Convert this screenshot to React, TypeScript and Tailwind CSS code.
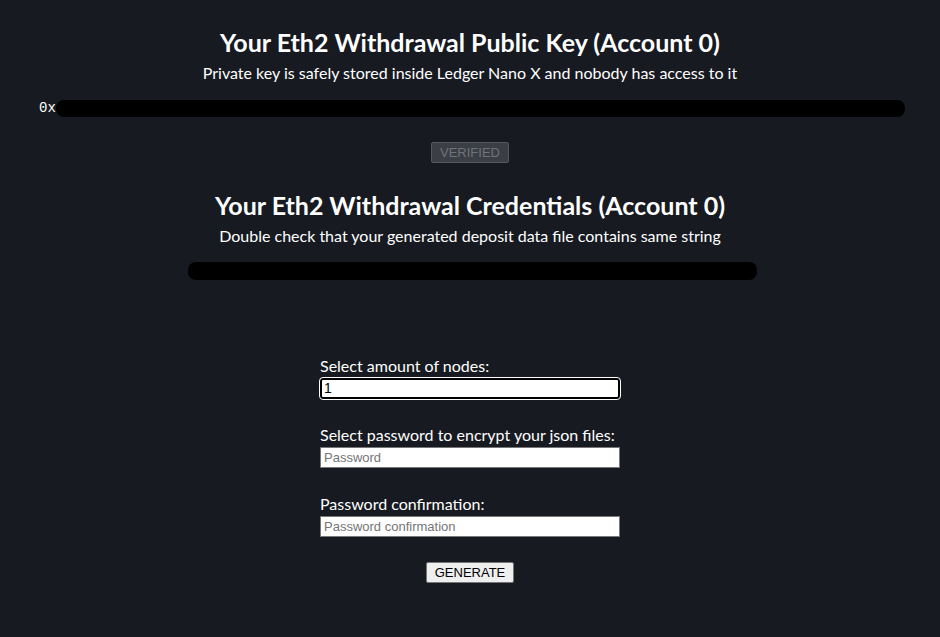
import { useState } from 'react'

const sans = { fontFamily: 'Lato, "Noto Sans", sans-serif' }

export default function App() {
  const [nodes, setNodes] = useState('1')
  const [password, setPassword] = useState('')
  const [confirm, setConfirm] = useState('')

  return (
    <div className="min-h-[637px] w-full bg-[#171a21] text-white" style={sans}>
      <div className="flex flex-col items-center pt-[27px]">
        <h1 className="text-[25px] font-bold leading-[30px]">Your Eth2 Withdrawal Public Key (Account 0)</h1>
        <p className="mt-[7px] text-[16px] leading-[18px]">Private key is safely stored inside Ledger Nano X and nobody has access to it</p>

        {/* public key, hidden */}
        <div className="mt-[18px] flex w-full items-center pl-[39px] pr-[35px]">
          <span className="font-['Liberation_Mono',monospace] text-[14px] leading-[17px] text-white">0x</span>
          <div className="h-[17px] flex-1 rounded-[8px] bg-black"></div>
        </div>

        <button
          disabled
          className="mt-[25px] h-[21px] w-[78px] rounded-[2px] border border-[#55585e] bg-[#3b3e44] font-['Liberation_Sans',sans-serif] text-[13px] leading-[19px] text-[#6f737a]"
        >
          VERIFIED
        </button>

        <h2 className="mt-[27px] text-[25px] font-bold leading-[30px]">Your Eth2 Withdrawal Credentials (Account 0)</h2>
        <p className="mt-[7px] text-[16px] leading-[18px]">Double check that your generated deposit data file contains same string</p>
        <div className="ml-[5px] mt-[17px] h-[18px] w-[569px] rounded-[8px] bg-black"></div>

        {/* form */}
        <div className="mt-[76px] flex w-[300px] flex-col">
          <label className="mb-[2px] text-[16px] leading-[20px]">Select amount of nodes:</label>
          <input
            value={nodes}
            onChange={(e) => setNodes(e.target.value)}
            className="h-[21px] w-[300px] rounded-[3px] border-2 border-black bg-white px-[2px] font-['Liberation_Sans',sans-serif] text-[14px] text-black outline outline-1 outline-white"
          />

          <label className="mb-[2px] mt-[26px] text-[16px] leading-[20px]">Select password to encrypt your json files:</label>
          <input
            type="password"
            placeholder="Password"
            value={password}
            onChange={(e) => setPassword(e.target.value)}
            className="h-[21px] w-[300px] border border-[#767676] bg-white px-[3px] font-['Liberation_Sans',sans-serif] text-[13px] text-black placeholder:text-[#757575] focus:outline-none"
          />

          <label className="mb-[2px] mt-[26px] text-[16px] leading-[20px]">Password confirmation:</label>
          <input
            type="password"
            placeholder="Password confirmation"
            value={confirm}
            onChange={(e) => setConfirm(e.target.value)}
            className="h-[21px] w-[300px] border border-[#767676] bg-white px-[3px] font-['Liberation_Sans',sans-serif] text-[13px] text-black placeholder:text-[#757575] focus:outline-none"
          />

          <button className="mx-auto mt-[25px] h-[21px] w-[88px] rounded-[2px] border border-[#767676] bg-[#efefef] font-['Liberation_Sans',sans-serif] text-[13px] leading-[19px] text-black">
            GENERATE
          </button>
        </div>
      </div>
    </div>
  )
}
